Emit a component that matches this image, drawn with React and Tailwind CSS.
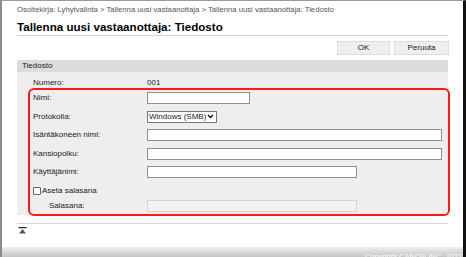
export default function App() {
  const font = { fontFamily: '"Liberation Sans", Arial, sans-serif' };
  const input = "h-[12px] border border-[#8f8f8f] bg-white";
  return (
    <div style={font} className="relative w-[466px] h-[257px] overflow-hidden bg-white border-t border-t-[#9a9a9a] border-l-2 border-l-[#8c8c8c] border-r-[3px] border-r-[#111]">
      <div className="pl-[15px] pr-[15px]">
        <div className="pt-[3px] text-[7.7px] leading-[11px] text-[#555] whitespace-nowrap">
          Osoitekirja: Lyhytvalinta &gt; Tallenna uusi vastaanottaja &gt; Tallenna uusi vastaanottaja: Tiedosto
        </div>
        <div className="mt-[5px] text-[11.6px] leading-[14px] font-bold text-black whitespace-nowrap">Tallenna uusi vastaanottaja: Tiedosto</div>
        <div className="mt-[1px] h-px bg-[#d4d4d4]" />
        <div className="mt-[5px] flex justify-end gap-[4px]">
          <button className="w-[53px] h-[14px] bg-[#eeeeee] border border-[#dcdcdc] text-[8px] leading-[12px] text-[#222]">OK</button>
          <button className="w-[55px] h-[14px] bg-[#eeeeee] border border-[#dcdcdc] text-[8px] leading-[12px] text-[#222] mr-[-1px]">Peruuta</button>
        </div>
        <div className="mt-[5px] h-[12px] bg-[#dcdcdc] pl-[5px] text-[8px] leading-[12px] text-[#222]">Tiedosto</div>
        <div className="bg-[#eeeeee] h-[143px] pt-[5px] text-[8px] text-[#222]">
          <div className="flex items-center h-[11px]">
            <div className="pl-[16px] w-[130px]">Numero:</div>
            <div>001</div>
          </div>
          <div className="ml-[11px] mr-[-2px] border-2 border-[#ff1a1a] rounded-[6px] pt-[1px] pb-[2px]">
            <div className="flex items-center h-[13px]">
              <div className="pl-[3px] w-[117px]">Nimi:</div>
              <div className={`${input} w-[103px]`} />
            </div>
            <div className="flex items-center h-[13px] mt-[6px]">
              <div className="pl-[3px] w-[117px]">Protokolla:</div>
              <div className="h-[12px] w-[70px] border border-[#7a7a7a] bg-white flex items-center justify-between pl-[1px] pr-[2px] text-[8px] leading-[10px]">
                <span>Windows (SMB)</span>
                <svg width="7" height="5" viewBox="0 0 7 5"><path d="M1 1 L3.5 3.5 L6 1" stroke="#111" strokeWidth="1.4" fill="none" /></svg>
              </div>
            </div>
            <div className="flex items-center h-[13px] mt-[5px]">
              <div className="pl-[3px] w-[117px]">Isäntäkoneen nimi:</div>
              <div className={`${input} w-[295px]`} />
            </div>
            <div className="flex items-center h-[13px] mt-[6px]">
              <div className="pl-[3px] w-[117px]">Kansiopolku:</div>
              <div className={`${input} w-[295px]`} />
            </div>
            <div className="flex items-center h-[13px] mt-[5px]">
              <div className="pl-[3px] w-[117px]">Käyttäjänimi:</div>
              <div className={`${input} w-[210px]`} />
            </div>
            <div className="flex items-center h-[13px] mt-[6px]">
              <div className="pl-[3px] flex items-center gap-[1px]">
                <div className="w-[8px] h-[8px] border border-[#666] bg-white rounded-[1px]" />
                <span>Aseta salasana</span>
              </div>
            </div>
            <div className="flex items-center h-[13px] mt-[2px]">
              <div className="pl-[19px] w-[117px]">Salasana:</div>
              <div className="h-[12px] w-[210px] border border-[#d2d2d2] bg-[#f3f3f3]" />
            </div>
          </div>
        </div>
        <div className="mt-[8px] h-px bg-[#d4d4d4]" />
        <div className="mt-[3px] h-[8px] flex items-start pl-[1px]">
          <svg width="9" height="7" viewBox="0 0 9 7">
            <rect x="0.5" y="0" width="8" height="1.2" fill="#222" />
            <path d="M4.5 2 L8 6.5 L1 6.5 Z" fill="#555" />
          </svg>
        </div>
      </div>
      <div className="absolute left-0 right-0 bottom-0 h-[10px] bg-gradient-to-b from-[#f0f0f0] to-[#c4c4c4] flex justify-end pr-[1px]">
        <span className="text-[7.5px] leading-[9px] mt-[5px] text-white whitespace-nowrap">Copyright CANON INC. 2022</span>
      </div>
    </div>
  );
}
